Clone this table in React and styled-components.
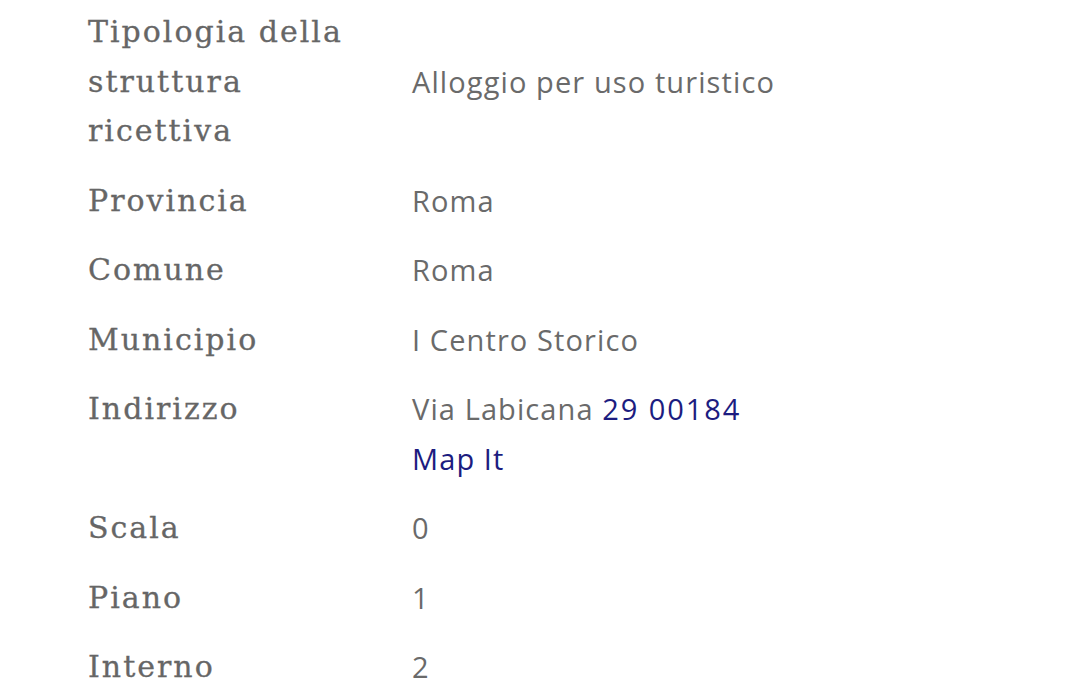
import React from "react";
import styled, { createGlobalStyle } from "styled-components";

const Global = createGlobalStyle`
  html, body { margin: 0; padding: 0; background: #ffffff; }
  body { width: 1080px; height: 700px; overflow: hidden; }
`;

const Sheet = styled.div`
  padding: 7px 0 0 88px;
  display: flex;
  flex-direction: column;
  gap: 20px;
`;

const Row = styled.div`
  display: grid;
  grid-template-columns: 324px 1fr;
`;

const Label = styled.div`
  align-self: start;
  padding-right: 44px;
  font-family: "DejaVu Serif", "Liberation Serif", serif;
  font-size: 30px;
  line-height: 49.5px;
  letter-spacing: 2px;
  color: #666666;
  -webkit-text-stroke: 0.3px #666666;
`;

const Value = styled.div`
  align-self: center;
  font-family: "Open Sans", "Noto Sans", sans-serif;
  font-weight: 400;
  font-size: 29px;
  line-height: 49.5px;
  letter-spacing: 1.1px;
  color: #6a6a6a;
`;

const Link = styled.a`
  font-family: "Open Sans", "Noto Sans", sans-serif;
  font-weight: 500;
  color: #1c1c80;
  text-decoration: none;
  letter-spacing: ${(p) => (p.$wide ? "1.9px" : "1.1px")};
`;

const rows = [
  { label: "Tipologia della struttura ricettiva", value: "Alloggio per uso turistico" },
  { label: "Provincia", value: "Roma" },
  { label: "Comune", value: "Roma" },
  { label: "Municipio", value: "I Centro Storico" },
  {
    label: "Indirizzo",
    value: (
      <>
        Via Labicana <Link href="#" $wide>29 00184</Link>
        <br />
        <Link href="#">Map It</Link>
      </>
    ),
  },
  { label: "Scala", value: "0" },
  { label: "Piano", value: "1" },
  { label: "Interno", value: "2" },
];

export default function App() {
  return (
    <>
      <Global />
      <Sheet>
        {rows.map((r) => (
          <Row key={r.label}>
            <Label>{r.label}</Label>
            <Value>{r.value}</Value>
          </Row>
        ))}
      </Sheet>
    </>
  );
}
